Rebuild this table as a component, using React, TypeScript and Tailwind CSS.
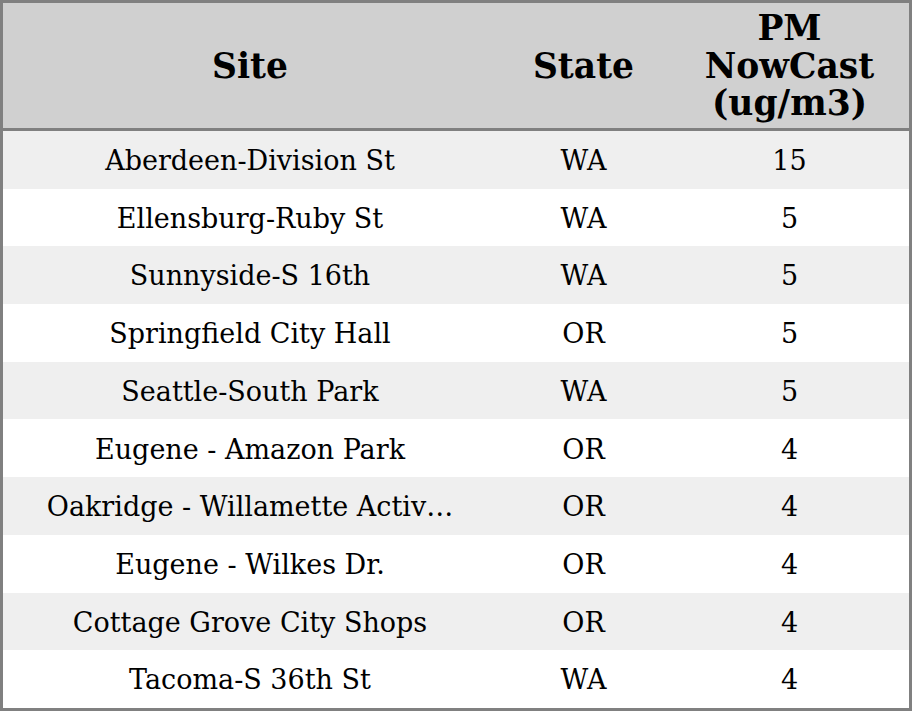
import React from 'react';

interface SiteRow {
  site: string;
  state: string;
  pm: number;
}

const rows: SiteRow[] = [
  { site: 'Aberdeen-Division St', state: 'WA', pm: 15 },
  { site: 'Ellensburg-Ruby St', state: 'WA', pm: 5 },
  { site: 'Sunnyside-S 16th', state: 'WA', pm: 5 },
  { site: 'Springfield City Hall', state: 'OR', pm: 5 },
  { site: 'Seattle-South Park', state: 'WA', pm: 5 },
  { site: 'Eugene - Amazon Park', state: 'OR', pm: 4 },
  { site: 'Oakridge - Willamette Activ\u2026', state: 'OR', pm: 4 },
  { site: 'Eugene - Wilkes Dr.', state: 'OR', pm: 4 },
  { site: 'Cottage Grove City Shops', state: 'OR', pm: 4 },
  { site: 'Tacoma-S 36th St', state: 'WA', pm: 4 },
];

const cols = 'grid grid-cols-[494px_173px_239px]';

const App: React.FC = () => {
  return (
    <div className="w-[912px] h-[711px] border-[3px] border-[#808080] bg-white text-black font-['DejaVu_Serif',serif]">
      {/* Header */}
      <div className={`${cols} h-[128px] pt-[2px] bg-[#d0d0d0] border-b-[3px] border-[#808080] font-bold text-[34.5px] leading-[37.5px]`}>
        <div className="flex items-center justify-center">Site</div>
        <div className="flex items-center justify-center">State</div>
        <div className="flex items-center justify-center text-center">
          PM
          <br />
          NowCast
          <br />
          (ug/m3)
        </div>
      </div>

      {/* Rows */}
      <div className="flex flex-col">
        {rows.map((r, i) => (
          <div
            key={r.site}
            className={`${cols} h-[57.7px] pt-[3px] text-[27px] ${i % 2 === 0 ? 'bg-[#efefef]' : 'bg-white'}`}
          >
            <div className="flex items-center justify-center whitespace-nowrap">{r.site}</div>
            <div className="flex items-center justify-center">{r.state}</div>
            <div className="flex items-center justify-center">{r.pm}</div>
          </div>
        ))}
      </div>
    </div>
  );
};

export default App;
